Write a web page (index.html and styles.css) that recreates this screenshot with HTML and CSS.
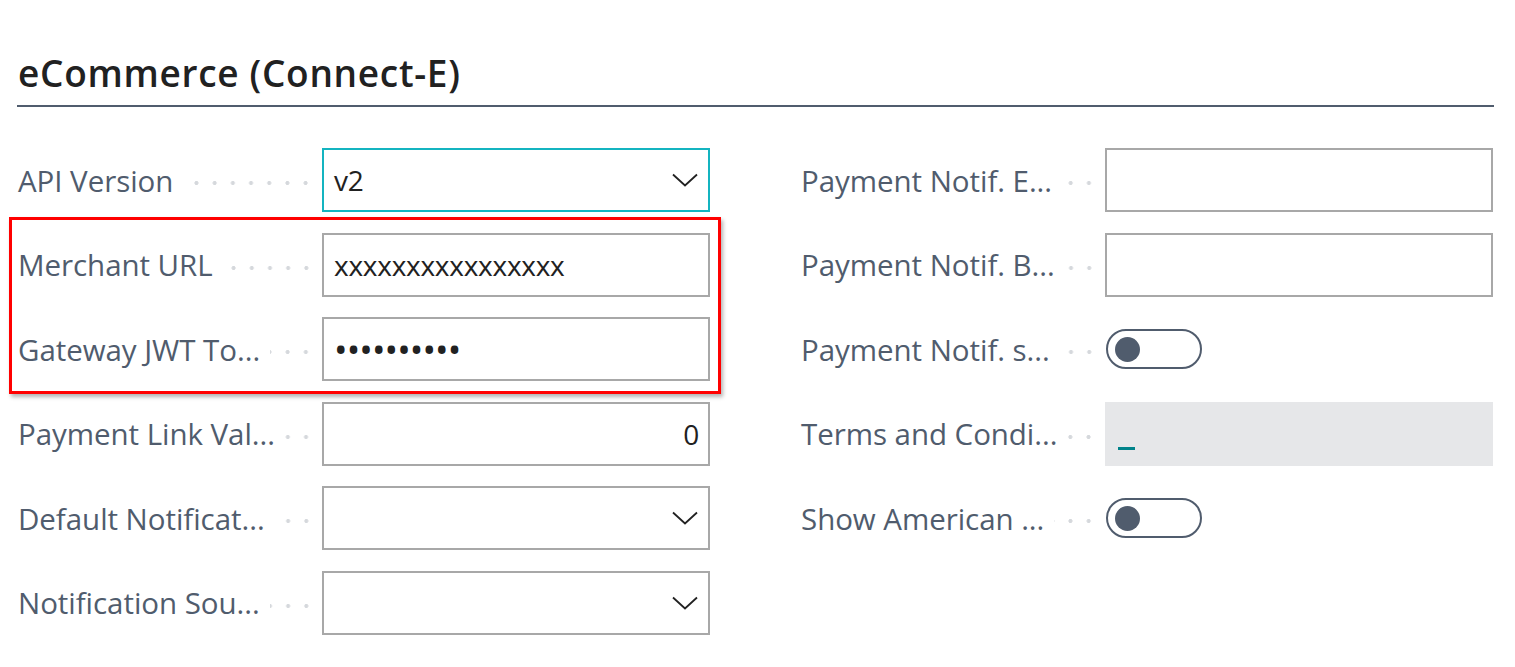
FILE: index.html
```html
<!DOCTYPE html>
<html lang="en">
<head>
<meta charset="utf-8">
<title>eCommerce (Connect-E)</title>
<link rel="stylesheet" href="styles.css">
</head>
<body>
<main class="page">
  <h1 class="title">eCommerce (Connect-E)</h1>
  <div class="grid">
    <div class="col">
      <div class="field">
        <div class="caption"><span class="label">API Version</span><span class="dots"></span></div>
        <div class="control select focused"><span class="value">v2</span>
          <svg class="chev" viewBox="0 0 26 14" width="26" height="14"><path d="M1 1.5 L13 12.5 L25 1.5" fill="none" stroke="#212121" stroke-width="1.8"/></svg>
        </div>
      </div>
      <div class="field">
        <div class="caption"><span class="label">Merchant URL</span><span class="dots"></span></div>
        <div class="control"><span class="value">xxxxxxxxxxxxxxxx</span></div>
      </div>
      <div class="field">
        <div class="caption"><span class="label">Gateway JWT To...</span><span class="dots"></span></div>
        <div class="control"><span class="value pw">••••••••••</span></div>
      </div>
      <div class="field">
        <div class="caption"><span class="label">Payment Link Val...</span><span class="dots"></span></div>
        <div class="control number"><span class="value">0</span></div>
      </div>
      <div class="field">
        <div class="caption"><span class="label">Default Notificat...</span><span class="dots"></span></div>
        <div class="control select"><span class="value"></span>
          <svg class="chev" viewBox="0 0 26 14" width="26" height="14"><path d="M1 1.5 L13 12.5 L25 1.5" fill="none" stroke="#212121" stroke-width="1.8"/></svg>
        </div>
      </div>
      <div class="field">
        <div class="caption"><span class="label">Notification Sou...</span><span class="dots"></span></div>
        <div class="control select"><span class="value"></span>
          <svg class="chev" viewBox="0 0 26 14" width="26" height="14"><path d="M1 1.5 L13 12.5 L25 1.5" fill="none" stroke="#212121" stroke-width="1.8"/></svg>
        </div>
      </div>
      <div class="highlight" aria-hidden="true"></div>
    </div>
    <div class="col">
      <div class="field">
        <div class="caption"><span class="label">Payment Notif. E...</span><span class="dots"></span></div>
        <div class="control"><span class="value"></span></div>
      </div>
      <div class="field">
        <div class="caption"><span class="label">Payment Notif. B...</span><span class="dots"></span></div>
        <div class="control"><span class="value"></span></div>
      </div>
      <div class="field">
        <div class="caption"><span class="label">Payment Notif. s...</span><span class="dots"></span></div>
        <div class="toggle-wrap"><span class="toggle"><span class="knob"></span></span></div>
      </div>
      <div class="field">
        <div class="caption"><span class="label">Terms and Condi...</span><span class="dots"></span></div>
        <div class="control readonly"><span class="blank"></span></div>
      </div>
      <div class="field">
        <div class="caption"><span class="label">Show American ...</span><span class="dots"></span></div>
        <div class="toggle-wrap"><span class="toggle"><span class="knob"></span></span></div>
      </div>
    </div>
  </div>
</main>
</body>
</html>
```
FILE: styles.css
```css
* { box-sizing: border-box; }
html, body { margin: 0; padding: 0; background: #ffffff; }
body {
  font-family: "Open Sans", "Noto Sans", sans-serif;
  color: #212121;
}
.page {
  padding: 48px 21px 0 17px;
  width: 1515px;
}
.title {
  margin: 0;
  font-size: 37px;
  font-weight: 600;
  line-height: 50px;
  color: #212121;
  padding-left: 1px;
  padding-bottom: 7px;
  border-bottom: 2px solid #505c6d;
  letter-spacing: 0.7px;
}
.grid {
  display: grid;
  grid-template-columns: 693px 693px;
  column-gap: 90px;
  padding-top: 41px;
}
.col {
  position: relative;
  display: flex;
  flex-direction: column;
  row-gap: 20.5px;
}
.field {
  display: flex;
  align-items: center;
  height: 64px;
}
.caption {
  width: 305px;
  flex: none;
  display: flex;
  align-items: center;
  padding-left: 1px;
  padding-right: 7px;
}
.label {
  font-size: 29.5px;
  color: #505c6d;
  white-space: nowrap;
  flex: none;
  letter-spacing: -0.05px;
}
.dots {
  flex: 1 1 auto;
  min-width: 20px;
  height: 8px;
  margin-top: 6px;
  margin-left: 10px;
  background-image: radial-gradient(circle at center, #d5d8dc 0, #d5d8dc 1.7px, transparent 2.3px);
  background-size: 18.2px 8px;
  background-repeat: repeat-x;
  background-position: right center;
}
.control {
  flex: none;
  width: 388px;
  height: 64px;
  border: 2px solid #a8a8a8;
  display: flex;
  align-items: center;
  padding: 0 10px 0 10px;
  background: #ffffff;
}
.control.focused { border-color: #14b4c0; }
.value {
  font-size: 28px;
  color: #212121;
  flex: 1;
  white-space: nowrap;
  letter-spacing: -0.25px;
}
.value.pw { font-size: 36px; letter-spacing: -0.9px; }
.number .value { text-align: right; }
.number { padding-right: 9px; }
.chev { flex: none; margin-right: 0; }
.readonly {
  border-color: transparent;
  background: #e6e7e9;
  align-items: flex-end;
  padding-bottom: 14px;
}
.blank {
  width: 17px;
  height: 3px;
  background: #00838a;
  margin-left: 1px;
}
.toggle-wrap { display: flex; align-items: center; height: 64px; }
.toggle {
  width: 96px;
  height: 40px;
  border: 2px solid #505c6d;
  border-radius: 20px;
  display: flex;
  align-items: center;
  padding-left: 7px;
  margin-left: 1px;
}
.knob {
  width: 25px;
  height: 25px;
  border-radius: 50%;
  background: #505c6d;
}
.highlight {
  position: absolute;
  left: -8px;
  top: 69px;
  width: 712px;
  height: 177px;
  border: 3px solid #ff0000;
  box-shadow: 2px 3px 4px rgba(0,0,0,0.3);
  pointer-events: none;
}
```
